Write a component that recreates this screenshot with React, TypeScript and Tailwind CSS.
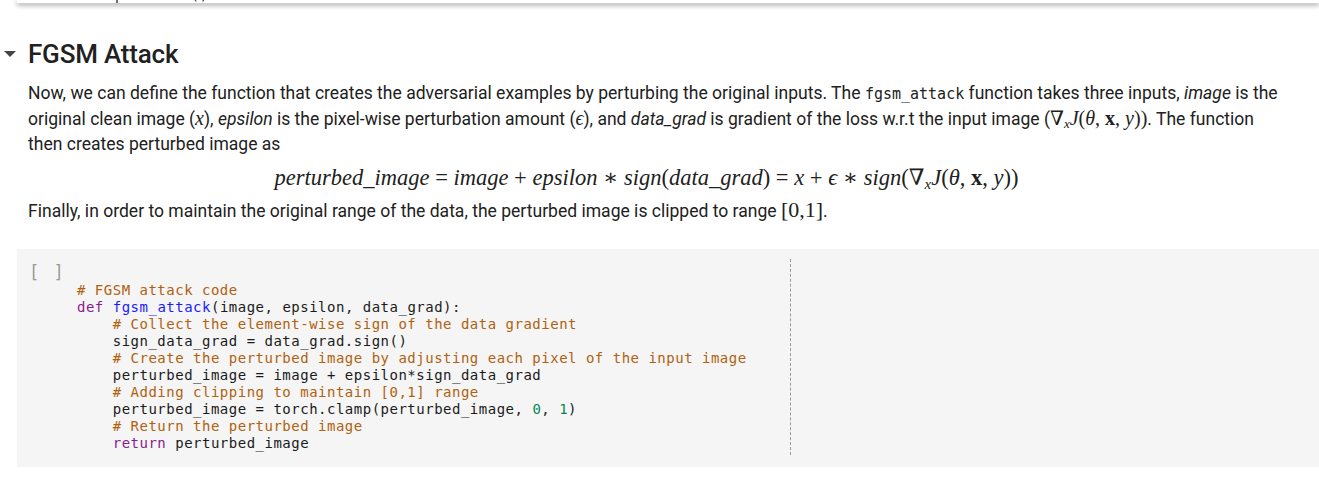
import React from "react";

const C = ({ children }: { children: React.ReactNode }) => <span className="text-[#b0620f]">{children}</span>;
const K = ({ children }: { children: React.ReactNode }) => <span className="text-[#8a1b8f]">{children}</span>;
const F = ({ children }: { children: React.ReactNode }) => <span className="text-[#1a1aff]">{children}</span>;
const N = ({ children }: { children: React.ReactNode }) => <span className="text-[#098658]">{children}</span>;

const M = ({ children, className = "" }: { children: React.ReactNode; className?: string }) => (
  <span className={`font-['Liberation_Serif','DejaVu_Serif',serif] text-[20px] leading-none ${className}`}>{children}</span>
);

export default function App() {
  return (
    <div className="w-[1319px] h-[480px] bg-white overflow-hidden text-[#212121] font-['Roboto','Noto_Sans',sans-serif]">
      {/* previous cell output, scrolled off */}
      <div className="ml-[17px] h-[3px] overflow-hidden bg-white shadow-[0_2px_5px_rgba(0,0,0,0.45)] relative z-10">
        <div className="ml-[98px] mt-[-13px] text-[14px] leading-[16px] font-['DejaVu_Sans_Mono',monospace] tracking-[1px]">plt.show()</div>
      </div>

      <div className="flex items-center mt-[35px] h-[32px]">
        <div className="w-[28px] flex justify-center pr-[8px]">
          <div className="w-0 h-0 border-l-[6px] border-r-[6px] border-t-[6px] border-l-transparent border-r-transparent border-t-[#444]" />
        </div>
        <h2 className="text-[26px] font-medium tracking-[-0.2px]">FGSM Attack</h2>
      </div>

      <div className="pl-[28px] pr-[30px] mt-[11px] text-[17.55px] leading-[25.7px] text-[#212121]">
        <p>
          Now, we can define the function that creates the adversarial examples by perturbing the original inputs. The{" "}
          <code className="font-['DejaVu_Sans_Mono',monospace] text-[15px] leading-none">fgsm_attack</code> function takes three inputs,{" "}
          <i>image</i> is the original clean image (<M><i>x</i></M>), <i>epsilon</i> is the pixel-wise perturbation amount (
          <M><i>ϵ</i></M>), and <i>data_grad</i> is gradient of the loss w.r.t the input image (
          <M>
            ∇<sub className="text-[13px]"><i>x</i></sub>
            <i>J</i>(<i>θ</i>, <b>x</b>, <i>y</i>))
          </M>
          . The function then creates perturbed image as
        </p>
        <div className="text-center mt-[8px] mb-[6px] pr-[24px] h-[27px] leading-[27px]">
          <M className="text-[22.5px]">
            <i>perturbed_image</i> = <i>image</i> + <i>epsilon</i> ∗ <i>sign</i>(<i>data_grad</i>) = <i>x</i> + <i>ϵ</i> ∗{" "}
            <i>sign</i>(∇<sub className="text-[15px]"><i>x</i></sub>
            <i>J</i>(<i>θ</i>, <b>x</b>, <i>y</i>))
          </M>
        </div>
        <p>
          Finally, in order to maintain the original range of the data, the perturbed image is clipped to range{" "}
          <M className="text-[22px]">[0,1]</M>.
        </p>
      </div>

      <div className="ml-[17px] mt-[24px] h-[218px] bg-[#f5f5f5] relative flex">
        <div className="w-[60px] pl-[12px] pt-[11px] text-[17px] text-[#9a9a9a] font-['DejaVu_Sans_Mono',monospace] tracking-[2px]">[ ]</div>
        <pre className="pt-[33px] text-[14px] leading-[17px] tracking-[0.5px] text-[#1b1b1b] font-['DejaVu_Sans_Mono',monospace]">
          <C># FGSM attack code</C>
          {"\n"}
          <K>def</K> <F>fgsm_attack</F>(image, epsilon, data_grad):
          {"\n    "}
          <C># Collect the element-wise sign of the data gradient</C>
          {"\n    "}sign_data_grad = data_grad.sign()
          {"\n    "}
          <C># Create the perturbed image by adjusting each pixel of the input image</C>
          {"\n    "}perturbed_image = image + epsilon*sign_data_grad
          {"\n    "}
          <C># Adding clipping to maintain [0,1] range</C>
          {"\n    "}perturbed_image = torch.clamp(perturbed_image, <N>0</N>, <N>1</N>)
          {"\n    "}
          <C># Return the perturbed image</C>
          {"\n    "}
          <K>return</K> perturbed_image
        </pre>
        {/* 80 column ruler */}
        <div className="absolute left-[773px] top-[10px] bottom-[12px] border-l border-dashed border-[#999]" />
      </div>
    </div>
  );
}
